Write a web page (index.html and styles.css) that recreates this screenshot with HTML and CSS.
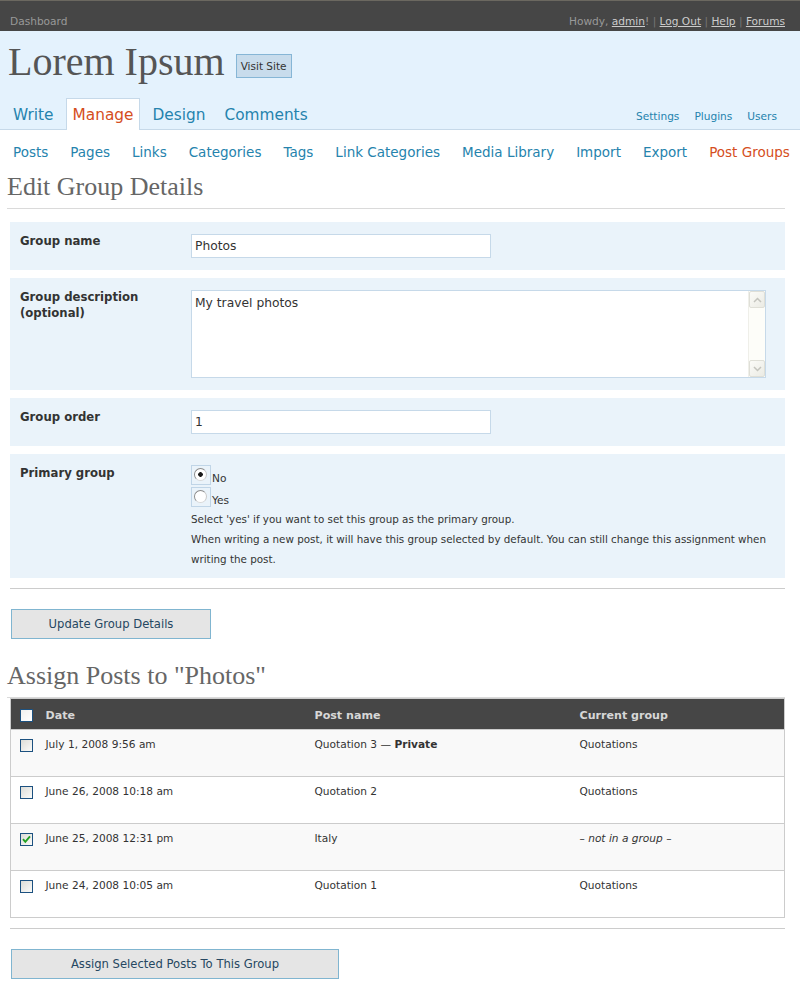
FILE: index.html
```html
<!DOCTYPE html>
<html lang="en">
<head>
    <meta charset="UTF-8">
    <meta name="viewport" content="width=device-width, initial-scale=1.0">
    <title>Post Groups &lsaquo; Lorem Ipsum &#8212; WordPress</title>
    <link rel="stylesheet" href="styles.css">
</head>
<body>

<div id="user-bar">
    <a class="dash-link" href="#">Dashboard</a>
    <p id="user-info">Howdy, <a href="#">admin</a>! <span class="sep">|</span> <a href="#">Log Out</a> <span class="sep">|</span> <a href="#">Help</a> <span class="sep">|</span> <a href="#">Forums</a></p>
</div>

<div id="head">
    <div id="blog-title">
        <h1>Lorem Ipsum</h1>
        <a class="visit-site" href="#">Visit Site</a>
    </div>
    <div id="menus">
        <ul id="dashmenu">
            <li><a href="#">Write</a></li>
            <li class="current"><a href="#">Manage</a></li>
            <li><a href="#">Design</a></li>
            <li><a href="#">Comments</a></li>
        </ul>
        <ul id="sidemenu">
            <li><a href="#">Settings</a></li>
            <li><a href="#">Plugins</a></li>
            <li><a href="#">Users</a></li>
        </ul>
    </div>
</div>

<ul id="submenu">
    <li><a href="#">Posts</a></li>
    <li><a href="#">Pages</a></li>
    <li><a href="#">Links</a></li>
    <li><a href="#">Categories</a></li>
    <li><a href="#">Tags</a></li>
    <li><a href="#">Link Categories</a></li>
    <li><a href="#">Media Library</a></li>
    <li><a href="#">Import</a></li>
    <li><a href="#">Export</a></li>
    <li class="current"><a href="#">Post Groups</a></li>
</ul>

<div class="wrap">
    <h2>Edit Group Details</h2>

    <table class="form-table">
        <tr>
            <th>Group name</th>
            <td><input class="text-input" type="text" value="Photos"></td>
        </tr>
        <tr>
            <th>Group description (optional)</th>
            <td>
                <div class="textarea-box">
                    <textarea rows="4">My travel photos</textarea>
                    <div class="fake-scroll">
                        <span class="sb-btn"><svg width="9" height="6" viewBox="0 0 9 6"><polyline points="1,5 4.5,1.5 8,5" fill="none" stroke="#c4c4be" stroke-width="1.5"/></svg></span>
                        <span class="sb-track"></span>
                        <span class="sb-btn"><svg width="9" height="6" viewBox="0 0 9 6"><polyline points="1,1 4.5,4.5 8,1" fill="none" stroke="#c4c4be" stroke-width="1.5"/></svg></span>
                    </div>
                </div>
            </td>
        </tr>
        <tr>
            <th>Group order</th>
            <td><input class="text-input" type="text" value="1"></td>
        </tr>
        <tr>
            <th>Primary group</th>
            <td class="radio-cell">
                <div class="radio-line">
                    <span class="radio-box"><input type="radio" name="primary" checked></span>
                    <label>No</label>
                </div>
                <div class="radio-line">
                    <span class="radio-box"><input type="radio" name="primary"></span>
                    <label>Yes</label>
                </div>
                <p class="note">Select 'yes' if you want to set this group as the primary group.<br>
                When writing a new post, it will have this group selected by default. You can still change this assignment when writing the post.</p>
            </td>
        </tr>
    </table>

    <hr class="divider">

    <button class="button button-update">Update Group Details</button>

    <h2 class="second">Assign Posts to "Photos"</h2>

    <table class="widefat">
        <colgroup>
            <col class="c-check">
            <col class="c-date">
            <col class="c-post">
            <col>
        </colgroup>
        <thead>
            <tr>
                <th class="check-col"><span class="cb cb-head"></span></th>
                <th>Date</th>
                <th>Post name</th>
                <th>Current group</th>
            </tr>
        </thead>
        <tbody>
            <tr class="alt">
                <td class="check-col"><span class="cb"></span></td>
                <td>July 1, 2008 9:56 am</td>
                <td>Quotation 3 &mdash; <strong>Private</strong></td>
                <td>Quotations</td>
            </tr>
            <tr>
                <td class="check-col"><span class="cb"></span></td>
                <td>June 26, 2008 10:18 am</td>
                <td>Quotation 2</td>
                <td>Quotations</td>
            </tr>
            <tr class="alt">
                <td class="check-col"><span class="cb"><svg width="11" height="11" viewBox="0 0 11 11"><path d="M2 5.2 L4.3 7.8 L9 2.4" fill="none" stroke="#22a022" stroke-width="1.9"/></svg></span></td>
                <td>June 25, 2008 12:31 pm</td>
                <td>Italy</td>
                <td><em>&ndash; not in a group &ndash;</em></td>
            </tr>
            <tr>
                <td class="check-col"><span class="cb"></span></td>
                <td>June 24, 2008 10:05 am</td>
                <td>Quotation 1</td>
                <td>Quotations</td>
            </tr>
        </tbody>
    </table>

    <hr class="divider divider-low">

    <button class="button button-assign">Assign Selected Posts To This Group</button>
</div>

</body>
</html>
```

FILE: styles.css
```css
body {
    margin: 0;
    background: #fff;
    color: #333;
    font-family: "DejaVu Sans", Verdana, sans-serif;
}

a {
    color: #2583ad;
    text-decoration: none;
}

ul {
    list-style: none;
    margin: 0;
    padding: 0;
}

/* top user bar */
#user-bar {
    display: flex;
    justify-content: space-between;
    background: #464646;
    border-top: 1px solid #6b6860;
    padding: 14px 15px 3px 10px;
    font-size: 10.6px;
    line-height: 13px;
    color: #999;
}

#user-bar .dash-link {
    color: #999;
}

#user-info {
    margin: 0;
}

#user-info a {
    color: #ccc;
    text-decoration: underline;
}

#user-info .sep {
    color: #777;
}

/* blog header */
#head {
    background: #e4f2fd;
    border-bottom: 1px solid #c6d9e9;
    padding: 8px 15px 0 8px;
}

#blog-title {
    display: flex;
    align-items: flex-start;
}

#blog-title h1 {
    margin: 0;
    font: normal 40px/46px "Liberation Serif", serif;
    color: #555;
}

.visit-site {
    margin: 15px 0 0 11px;
    height: 24px;
    box-sizing: border-box;
    padding: 0 4px;
    border: 1px solid #86b6d6;
    background: #c8dcec;
    color: #333;
    font-size: 10.5px;
    line-height: 22px;
}

#menus {
    display: flex;
    justify-content: space-between;
    align-items: flex-end;
    margin-top: 13px;
}

#dashmenu {
    display: flex;
    gap: 5px;
    margin: 0 0 -1px -2px;
}

#dashmenu a {
    display: block;
    padding: 2px 6px 0;
    line-height: 29px;
    font-size: 15.35px;
    border: 1px solid transparent;
    border-bottom: 0;
}

#dashmenu .current a {
    background: #fff;
    border-color: #c6d9e9;
    color: #d54e21;
}

#sidemenu {
    display: flex;
    gap: 15px;
    margin-right: 8px;
    padding-bottom: 6px;
    font-size: 10.6px;
    line-height: 13px;
}

/* sub menu */
#submenu {
    display: flex;
    gap: 22px;
    margin-top: 12px;
    padding-left: 13px;
    font-size: 13.5px;
    line-height: 20px;
}

#submenu .current a {
    color: #d54e21;
}

/* content */
.wrap {
    padding: 0 15px 0 7px;
}

.wrap h2 {
    margin: 10px 0 0;
    padding-bottom: 6px;
    border-bottom: 1px solid #dadada;
    font: normal 26px/30px "Liberation Serif", serif;
    color: #666;
}

.wrap h2.second {
    margin-top: 22px;
}

.form-table {
    border-collapse: separate;
    border-spacing: 0 8px;
    margin: 5px 0 0 3px;
    width: calc(100% - 3px);
}

.form-table th {
    box-sizing: border-box;
    width: 181px;
    padding: 11px 10px;
    text-align: left;
    vertical-align: top;
    font-size: 11.7px;
    line-height: 16px;
    background: #eaf3fa;
}

.form-table td {
    padding: 12px 10px 12px 0;
    vertical-align: top;
    background: #eaf3fa;
    font-size: 10.6px;
}

.form-table td.radio-cell {
    padding-top: 11px;
    padding-bottom: 9px;
}

.text-input {
    display: block;
    box-sizing: border-box;
    width: 300px;
    height: 24px;
    margin: 0;
    padding: 0 3px;
    border: 1px solid #c6d9e9;
    background: #fff;
    color: #333;
    font: 12.3px "DejaVu Sans", Verdana, sans-serif;
    outline: none;
}

.textarea-box {
    display: flex;
    box-sizing: border-box;
    width: 575px;
    height: 88px;
    border: 1px solid #c6d9e9;
    background: #fff;
}

.textarea-box textarea {
    flex: 1;
    margin: 0;
    padding: 4px 3px;
    border: 0;
    background: transparent;
    color: #333;
    font: 12.3px/16px "DejaVu Sans", Verdana, sans-serif;
    resize: none;
    outline: none;
    overflow: hidden;
}

.fake-scroll {
    display: flex;
    flex-direction: column;
    width: 17px;
    box-sizing: border-box;
    background: #fdfdf9;
    border-left: 1px solid #efefe9;
}

.sb-btn {
    display: flex;
    align-items: center;
    justify-content: center;
    height: 17px;
    box-sizing: border-box;
    background: linear-gradient(135deg, #fbfbf8, #ebebe4);
    border: 1px solid #dfdfd7;
    border-radius: 2px;
}

.sb-track {
    flex: 1;
}

.radio-line {
    display: flex;
    height: 22px;
}

.radio-box {
    box-sizing: border-box;
    width: 20px;
    height: 20px;
    padding: 2px 0 0 2px;
    border: 1px solid #c0d5e7;
}

.radio-box input {
    appearance: none;
    -webkit-appearance: none;
    display: block;
    width: 13px;
    height: 13px;
    margin: 0;
    border: 1px solid #8c8c8c;
    border-right-color: #c8c8c8;
    border-bottom-color: #d8d8d8;
    border-radius: 50%;
    background: #fff;
}

.radio-box input:checked {
    background: radial-gradient(circle, #1a1a1a 0, #1a1a1a 2px, #fff 2.6px);
}

.radio-line label {
    align-self: flex-end;
    padding: 0 0 2px 1px;
    font-size: 10.6px;
    line-height: 13px;
}

.note {
    margin: 0;
    font-size: 10.35px;
    line-height: 20px;
}

.divider {
    height: 0;
    margin: 2px 0 0 3px;
    border: 0;
    border-top: 1px solid #ccc;
}

.divider-low {
    margin-top: 10px;
}

.button {
    display: block;
    box-sizing: border-box;
    height: 30px;
    margin: 20px 0 0 4px;
    padding: 0;
    border: 1px solid #80b5d0;
    background: #e5e5e5;
    color: #264761;
    font: 11.6px/28px "DejaVu Sans", Verdana, sans-serif;
    text-align: center;
    cursor: pointer;
}

.button-update {
    width: 200px;
}

.button-assign {
    width: 328px;
}

/* posts table */
.widefat {
    width: calc(100% - 3px);
    margin-left: 3px;
    border-collapse: collapse;
    border: 1px solid #ccc;
    table-layout: fixed;
}

.widefat .c-check {
    width: 25px;
}

.widefat .c-date {
    width: 269px;
}

.widefat .c-post {
    width: 265px;
}

.widefat thead th {
    padding: 9px 10px 7px;
    background: #464646;
    color: #d7d7d7;
    font-size: 11.1px;
    line-height: 13px;
    text-align: left;
}

.widefat tbody td {
    padding: 8px 10px 24px;
    border-top: 1px solid #ccc;
    font-size: 10.6px;
    line-height: 13px;
    vertical-align: top;
}

.widefat tr.alt td {
    background: #f9f9f9;
}

.widefat .check-col {
    padding-left: 9px;
    padding-right: 0;
}

.cb {
    display: block;
    box-sizing: border-box;
    width: 13px;
    height: 13px;
    margin-top: 1px;
    border: 1px solid #1c5180;
    background: linear-gradient(135deg, #dcdcd7, #fbfbf9);
}

.cb-head {
    background: linear-gradient(135deg, #f0f0ee, #fff);
}

.cb svg {
    display: block;
}
```
